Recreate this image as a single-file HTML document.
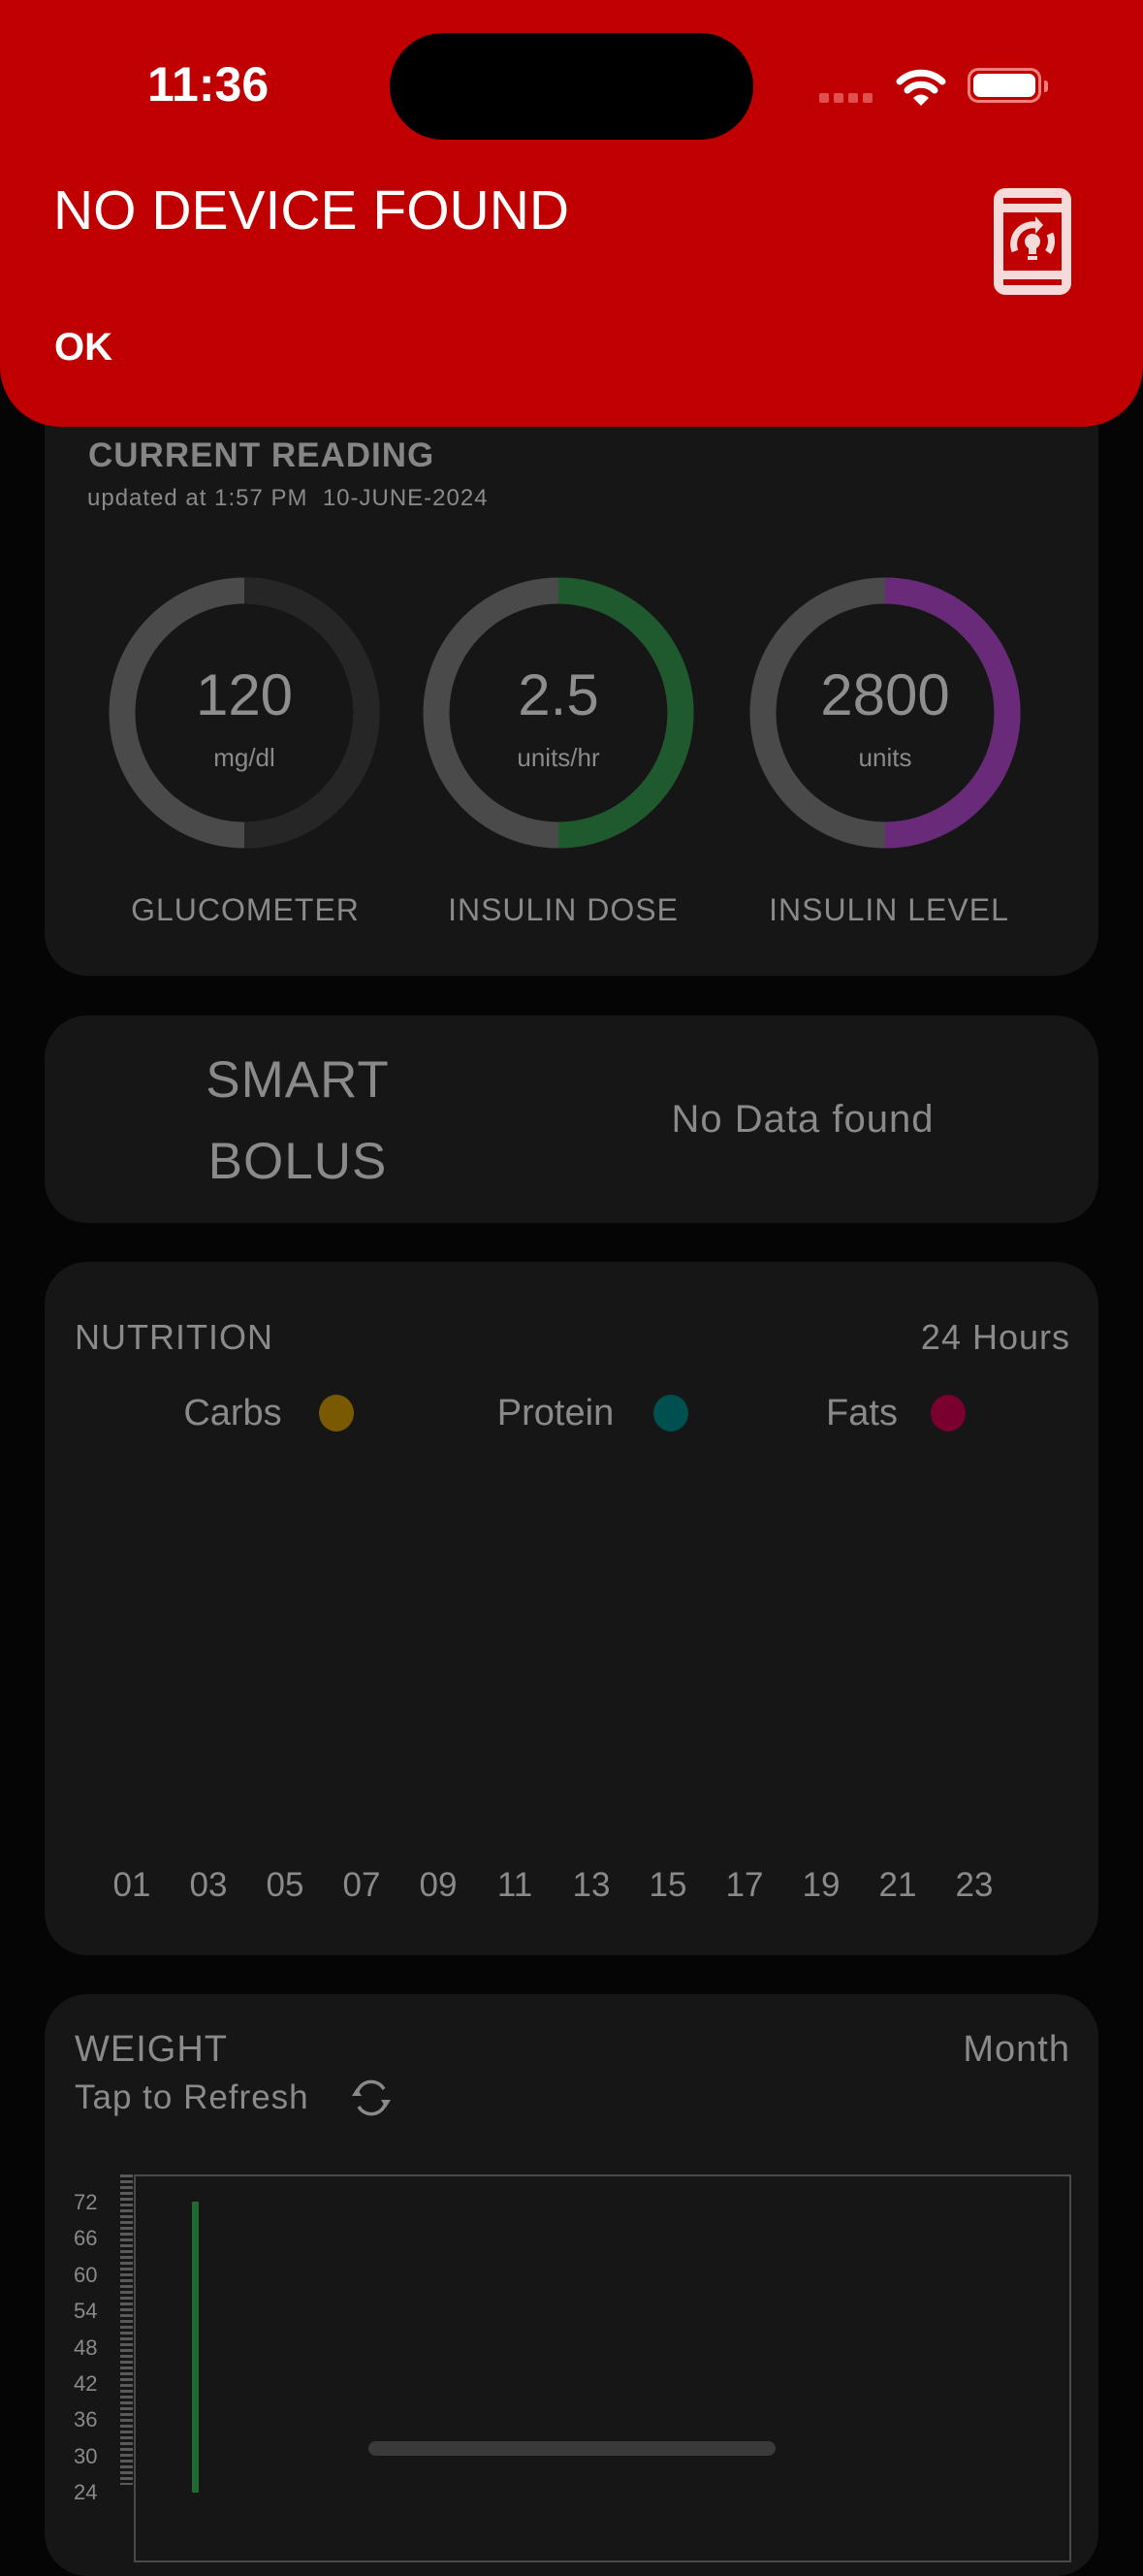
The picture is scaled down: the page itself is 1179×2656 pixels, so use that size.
<!DOCTYPE html>
<html><head><meta charset="utf-8">
<style>
*{margin:0;padding:0;box-sizing:border-box}
body{width:1179px;height:2556px;background:#050505;position:relative;overflow:hidden;font-family:"Liberation Sans",sans-serif;color:#8a8a8a}
.a{position:absolute;white-space:nowrap}
.card{position:absolute;left:46px;width:1087px;background:#161616;border-radius:44px}
.c{transform:translateX(-50%)}
</style></head><body>

<div class="card" style="top:380px;height:626px"></div>
<div class="card" style="top:1047px;height:214px"></div>
<div class="card" style="top:1301px;height:715px"></div>
<div class="card" style="top:2056px;height:600px"></div>

<!-- banner -->
<div class="a" style="left:0;top:0;width:1179px;height:440px;background:#c00000;border-radius:0 0 62px 62px"></div>
<div class="a" style="left:152px;top:58px;font-size:50px;font-weight:bold;color:#fff">11:36</div>
<div class="a" style="left:402px;top:34px;width:375px;height:110px;background:#000;border-radius:55px"></div>
<div class="a" style="left:845px;top:96px;width:60px;height:9px;">
 <span style="position:absolute;left:0;top:0;width:10px;height:10px;background:#e05050;border-radius:2px"></span>
 <span style="position:absolute;left:15px;top:0;width:10px;height:10px;background:#e05050;border-radius:2px"></span>
 <span style="position:absolute;left:30px;top:0;width:10px;height:10px;background:#e05050;border-radius:2px"></span>
 <span style="position:absolute;left:45px;top:0;width:10px;height:10px;background:#e05050;border-radius:2px"></span>
</div>
<svg class="a" style="left:924px;top:70px" width="52" height="40" viewBox="0 0 52 40">
 <path d="M4 14 A32 32 0 0 1 48 14" stroke="#fff" stroke-width="7" fill="none" stroke-linecap="round"/>
 <path d="M12 23 A20 20 0 0 1 40 23" stroke="#fff" stroke-width="7" fill="none" stroke-linecap="round"/>
 <path d="M18 31 L26 39 L34 31 A11 11 0 0 0 18 31Z" fill="#fff"/>
</svg>
<div class="a" style="left:998px;top:70px;width:76px;height:36px;border:3px solid #f08080;border-radius:11px"></div>
<div class="a" style="left:1004px;top:76px;width:64px;height:24px;background:#fff;border-radius:7px"></div>
<div class="a" style="left:1077px;top:83px;width:4px;height:12px;background:#f08080;border-radius:0 3px 3px 0"></div>

<div class="a" style="left:55px;top:184px;font-size:57px;color:#fff;font-weight:300">NO DEVICE FOUND</div>
<div class="a" style="left:56px;top:336px;font-size:40px;color:#fff;font-weight:bold">OK</div>
<svg class="a" style="left:1025px;top:194px" width="80" height="110" viewBox="0 0 80 110">
 <rect x="0" y="0" width="80" height="110" rx="12" fill="#f5dada"/>
 <rect x="10" y="10" width="60" height="6" fill="#c00000"/>
 <rect x="10" y="25" width="60" height="60" fill="#c00000"/>
 <rect x="10" y="94" width="60" height="6" fill="#c00000"/>
 <path d="M22 65 A20 20 0 0 1 44 38" stroke="#f5dada" stroke-width="7" fill="none"/>
 <path d="M43 29 L51 38 L43 47Z" fill="#f5dada"/>
 <path d="M58 47 A20 20 0 0 1 56 66" stroke="#f5dada" stroke-width="7" fill="none"/>
 <circle cx="40" cy="55" r="8" fill="#f5dada"/>
 <rect x="36" y="58" width="8" height="10" fill="#f5dada"/>
 <rect x="35" y="70" width="10" height="4" fill="#f5dada"/>
</svg>

<!-- current reading -->
<div class="a" style="left:91px;top:450px;font-size:35px;font-weight:bold;letter-spacing:1px;color:#858585">CURRENT READING</div>
<div class="a" style="left:90px;top:500px;font-size:24px;letter-spacing:1px">updated at 1:57 PM&nbsp; 10-JUNE-2024</div>

<svg class="a" style="left:0;top:590px" width="1179" height="300">
 <g fill="none" stroke-width="27">
  <circle cx="252" cy="145" r="126" stroke="#4a4a4a"/>
  <path d="M252 19 A126 126 0 0 1 252 271" stroke="#262626"/>
  <circle cx="576" cy="145" r="126" stroke="#4a4a4a"/>
  <path d="M576 19 A126 126 0 0 1 576 271" stroke="#1e5a2e"/>
  <circle cx="913" cy="145" r="126" stroke="#4a4a4a"/>
  <path d="M913 19 A126 126 0 0 1 913 271" stroke="#6a2a7a"/>
 </g>
</svg>
<div class="a c" style="left:252px;top:682px;font-size:60px;color:#8e8e8e">120</div>
<div class="a c" style="left:252px;top:766px;font-size:26px">mg/dl</div>
<div class="a c" style="left:576px;top:682px;font-size:60px;color:#8e8e8e">2.5</div>
<div class="a c" style="left:576px;top:766px;font-size:26px">units/hr</div>
<div class="a c" style="left:913px;top:682px;font-size:60px;color:#8e8e8e">2800</div>
<div class="a c" style="left:913px;top:766px;font-size:26px">units</div>
<div class="a c" style="left:253px;top:920px;font-size:32px;letter-spacing:1px">GLUCOMETER</div>
<div class="a c" style="left:581px;top:920px;font-size:32px;letter-spacing:1px">INSULIN DOSE</div>
<div class="a c" style="left:917px;top:920px;font-size:32px;letter-spacing:1px">INSULIN LEVEL</div>

<!-- smart bolus -->
<div class="a c" style="left:307px;top:1072px;font-size:53px;text-align:center;line-height:84px;letter-spacing:1px">SMART<br>BOLUS</div>
<div class="a c" style="left:828px;top:1132px;font-size:40px;letter-spacing:1px">No Data found</div>

<!-- nutrition -->
<div class="a" style="left:77px;top:1358px;font-size:36px;letter-spacing:1px">NUTRITION</div>
<div class="a" style="right:75px;top:1358px;font-size:36px;letter-spacing:1px">24 Hours</div>
<div class="a c" style="left:240px;top:1436px;font-size:38px">Carbs</div>
<div class="a" style="left:329px;top:1438px;width:36px;height:38px;border-radius:50%;background:#7a5a00"></div>
<div class="a c" style="left:573px;top:1436px;font-size:38px">Protein</div>
<div class="a" style="left:674px;top:1438px;width:36px;height:38px;border-radius:50%;background:#005050"></div>
<div class="a c" style="left:889px;top:1436px;font-size:38px">Fats</div>
<div class="a" style="left:960px;top:1438px;width:36px;height:38px;border-radius:50%;background:#7a0030"></div>
<div class="a" style="left:0;top:1924px;font-size:35px;width:1179px">
 <span class="a c" style="left:136px">01</span><span class="a c" style="left:215px">03</span><span class="a c" style="left:294px">05</span><span class="a c" style="left:373px">07</span><span class="a c" style="left:452px">09</span><span class="a c" style="left:531px">11</span><span class="a c" style="left:610px">13</span><span class="a c" style="left:689px">15</span><span class="a c" style="left:768px">17</span><span class="a c" style="left:847px">19</span><span class="a c" style="left:926px">21</span><span class="a c" style="left:1005px">23</span>
</div>

<!-- weight -->
<div class="a" style="left:77px;top:2092px;font-size:38px;letter-spacing:1px">WEIGHT</div>
<div class="a" style="right:75px;top:2092px;font-size:38px;letter-spacing:1px">Month</div>
<div class="a" style="left:77px;top:2143px;font-size:35px;letter-spacing:1px">Tap to Refresh</div>
<svg class="a" style="left:360px;top:2140px" width="46" height="46" viewBox="0 0 46 46">
 <path d="M8 20 A15 15 0 0 1 36 14" stroke="#8a8a8a" stroke-width="3.5" fill="none"/>
 <path d="M38 26 A15 15 0 0 1 10 32" stroke="#8a8a8a" stroke-width="3.5" fill="none"/>
 <path d="M3 21 L8 13 L13 21Z" fill="#8a8a8a"/>
 <path d="M33 25 L38 33 L43 25Z" fill="#8a8a8a"/>
</svg>
<div class="a" style="left:138px;top:2242px;width:967px;height:400px;border:2px solid #4a4a4a"></div>
<div class="a" style="left:124px;top:2242px;width:13px;height:320px;background:repeating-linear-gradient(#5a5a5a 0 3px,transparent 3px 6px)"></div>
<div class="a" style="left:198px;top:2270px;width:7px;height:300px;background:#1e6a30"></div>
<div class="a" style="left:76px;top:2252px;font-size:22px;line-height:37.4px;white-space:normal">72<br>66<br>60<br>54<br>48<br>42<br>36<br>30<br>24</div>
<div class="a" style="left:380px;top:2517px;width:420px;height:15px;background:#3a3a3a;border-radius:8px"></div>
</body></html>
